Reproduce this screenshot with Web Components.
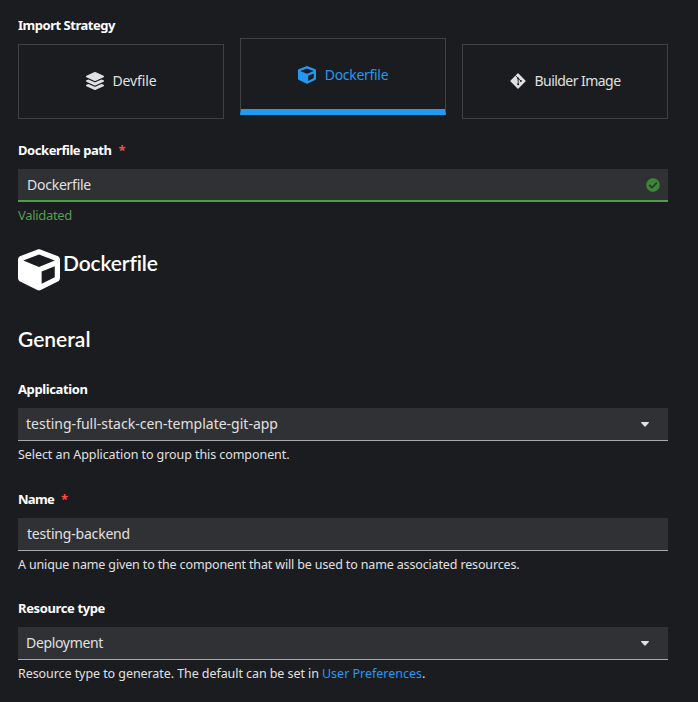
<!DOCTYPE html>
<html lang="en">
<head>
<meta charset="utf-8">
<title>Import from Git</title>
<style>
html,body{margin:0;background:#1b1c20;height:702px;overflow:hidden}
body{font-family:"Noto Sans","Open Sans",sans-serif;font-size:14px;color:#e0e0e0}
</style>
</head>
<body>
<import-form></import-form>
<script>
// Text run whose tracking is adjusted to span the width given in "w".
class FitText extends HTMLElement {
  connectedCallback() {
    const root = this.attachShadow({mode: 'open'});
    root.innerHTML = '<style>:host{display:inline-block;white-space:pre}</style><span><slot></slot></span>';
    const span = root.querySelector('span');
    const w = +this.getAttribute('w');
    const natural = span.getBoundingClientRect().width;
    const n = this.textContent.length;
    if (w && natural) span.style.letterSpacing = ((w - natural) / n) + 'px';
  }
}

const ICONS = {
  layers: ['0 0 512 512', '<path d="M12.41 148.02l232.94 105.67c6.8 3.09 14.49 3.09 21.29 0l232.94-105.67c16.55-7.51 16.55-32.52 0-40.03L266.65 2.31a25.607 25.607 0 0 0-21.29 0L12.41 107.98c-16.55 7.51-16.55 32.53 0 40.04zm487.18 88.28l-58.09-26.33-161.64 73.27c-7.56 3.43-15.59 5.17-23.86 5.17s-16.29-1.74-23.86-5.17L70.51 209.97l-58.1 26.33c-16.55 7.5-16.55 32.5 0 40l232.94 105.59c6.8 3.08 14.49 3.08 21.29 0L499.59 276.3c16.55-7.5 16.55-32.5 0-40zm0 127.8l-57.87-26.23-161.86 73.37c-7.56 3.43-15.59 5.17-23.86 5.17s-16.29-1.74-23.86-5.17L70.29 337.87 12.41 364.1c-16.55 7.5-16.55 32.5 0 40l232.94 105.59c6.8 3.08 14.49 3.08 21.29 0L499.59 404.1c16.55-7.5 16.55-32.5 0-40z"/>'],
  cube: ['0 0 512 512', '<path d="M239.1 6.3l-208 78c-18.7 7-31.1 25-31.1 45v225.1c0 18.2 10.3 34.8 26.5 42.9l208 104c13.5 6.8 29.4 6.8 42.9 0l208-104c16.3-8.1 26.5-24.8 26.5-42.9V129.3c0-20-12.4-37.9-31.1-44.9l-208-78C262 2.2 250 2.2 239.1 6.3zM256 68.4l192 72v1.1l-192 78-192-78v-1.1l192-72zm32 356V275.5l160-65v133.9l-160 80z"/>'],
  git: ['0 0 16 16', '<rect x="2.4" y="2.4" width="11.2" height="11.2" rx=".7" transform="rotate(45 8 8)"/><g stroke="#1b1c20" stroke-width=".9" fill="none"><path d="M5.5 2.6 8.2 5.3V11.3M8.2 5.3 10.8 8"/></g><g fill="#1b1c20"><circle cx="8.2" cy="5.4" r="1"/><circle cx="8.2" cy="11.2" r="1"/><circle cx="10.8" cy="8" r="1"/></g>'],
  check: ['0 0 512 512', '<path d="M504 256c0 136.967-111.033 248-248 248S8 392.967 8 256 119.033 8 256 8s248 111.033 248 248zM227.314 387.314l184-184c6.248-6.248 6.248-16.379 0-22.627l-22.627-22.627c-6.248-6.249-16.379-6.249-22.628 0L216 308.118l-70.059-70.059c-6.248-6.248-16.379-6.248-22.628 0l-22.627 22.627c-6.248 6.248-6.248 16.379 0 22.627l104 104c6.249 6.249 16.379 6.249 22.628.001z"/>'],
  caret: ['0 0 8 5', '<path d="M.5 0h7q.8.2.2.9L4.5 4.6q-.5.5-1 0L.3.9Q-.3.2.5 0z"/>']
};
class UiIcon extends HTMLElement {
  connectedCallback() {
    const [box, art] = ICONS[this.getAttribute('name')];
    this.attachShadow({mode: 'open'}).innerHTML =
      `<style>:host{display:block;flex:none}svg{display:block;width:100%;height:100%;fill:currentColor}</style><svg viewBox="${box}">${art}</svg>`;
  }
}

class StrategyTile extends HTMLElement {
  connectedCallback() {
    this.attachShadow({mode: 'open'}).innerHTML = `<style>
:host{display:flex;box-sizing:border-box;width:206px;height:75px;margin-top:6px;padding-bottom:1px;border:1px solid #3f4145;align-items:center;justify-content:center;gap:9px;line-height:20px}
:host([selected]){margin-top:0;height:77px;padding:2px 0 0;color:#2299f3;border-bottom:6px solid #2299f3}
ui-icon{width:18px;height:18px}
:host([icon=git]) ui-icon{width:16px;height:16px}
</style><ui-icon name="${this.getAttribute('icon')}"></ui-icon><slot></slot>`;
  }
}

class FormField extends HTMLElement {
  connectedCallback() {
    const a = k => this.getAttribute(k);
    const kind = a('kind');
    this.attachShadow({mode: 'open'}).innerHTML = `<style>
:host{display:block;height:var(--field-height,110px)}
.label{display:flex;height:21px;line-height:18px;font-size:13px;font-weight:700;color:#fff;gap:7px}
.star{color:#fa4b42;font-size:13px;line-height:19px}
.control{display:flex;box-sizing:border-box;height:33px;margin-top:7px;padding:0 8px 0 9px;background:#303134;border-bottom:1px solid #a7a9ac;align-items:center;justify-content:space-between;line-height:20px}
.select{padding:0 19px 0 8px}
.valid{border-bottom:2px solid #4f9e4a}
ui-icon[name=caret]{width:8px;height:5px;margin-top:1px;color:#e0e0e0}
ui-icon[name=check]{width:14px;height:14px;color:#3a8736}
.help{margin-top:4px;height:20px;line-height:20px;font-size:12.5px}
.valid+.help{line-height:18px;color:#559f50;font-size:13px}
</style>
<div class="label"><fit-text w="${a('lw')}">${a('label')}</fit-text>${this.hasAttribute('required') ? '<span class="star">*</span>' : ''}</div>
<div class="control ${kind}"><fit-text w="${a('vw')}">${a('value')}</fit-text>${kind === 'select' ? '<ui-icon name="caret"></ui-icon>' : kind === 'valid' ? '<ui-icon name="check"></ui-icon>' : ''}</div>
<div class="help"><slot></slot></div>`;
  }
}

class ImportForm extends HTMLElement {
  connectedCallback() {
    this.attachShadow({mode: 'open'}).innerHTML = `<style>
:host{display:block;box-sizing:border-box;width:698px;height:702px;padding:16px 30px 0 18px;background:#1b1c20}
.title{height:22px;line-height:18px;font-size:13px;font-weight:700;color:#fff}
.tiles{display:flex;gap:16px;align-items:flex-start;height:103px}
.builder{display:flex;gap:3px;height:79px;color:#fff}
.builder ui-icon{width:42px;height:42px}
h2,h3{margin:0;font:600 21px/28px Lato,"Noto Sans",sans-serif;color:#fff}
h3{height:52px;line-height:22px}
a{color:#2299f3;text-decoration:none}
</style>
<div class="title"><fit-text w="97">Import Strategy</fit-text></div>
<div class="tiles">
<strategy-tile icon="layers"><fit-text w="44">Devfile</fit-text></strategy-tile>
<strategy-tile icon="cube" selected><fit-text w="63.5">Dockerfile</fit-text></strategy-tile>
<strategy-tile icon="git"><fit-text w="86">Builder Image</fit-text></strategy-tile>
</div>
<form-field style="--field-height:108px" label="Dockerfile path" lw="93.5" required kind="valid" value="Dockerfile" vw="64"><fit-text w="54">Validated</fit-text></form-field>
<div class="builder"><ui-icon name="cube"></ui-icon><h2><fit-text w="94.5">Dockerfile</fit-text></h2></div>
<h3><fit-text w="72.5">General</fit-text></h3>
<form-field label="Application" lw="69.5" kind="select" value="testing-full-stack-cen-template-git-app" vw="252"><fit-text w="271.5">Select an Application to group this component.</fit-text></form-field>
<form-field style="--field-height:109px" label="Name" lw="36" required kind="text" value="testing-backend" vw="103"><fit-text w="501.5">A unique name given to the component that will be used to name associated resources.</fit-text></form-field>
<form-field label="Resource type" lw="87" kind="select" value="Deployment" vw="77"><fit-text w="304">Resource type to generate. The default can be set in </fit-text><a><fit-text w="100">User Preferences</fit-text></a>.</form-field>`;
  }
}
customElements.define('fit-text', FitText);
customElements.define('ui-icon', UiIcon);
customElements.define('strategy-tile', StrategyTile);
customElements.define('form-field', FormField);
customElements.define('import-form', ImportForm);
</script>
</body>
</html>
